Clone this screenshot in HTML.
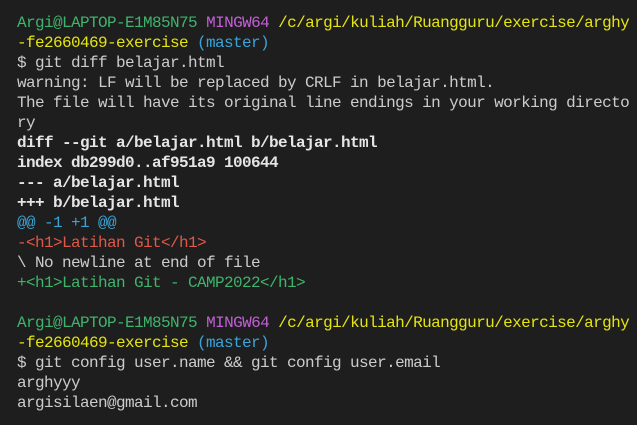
<!DOCTYPE html>
<html><head><style>
html,body{margin:0;padding:0;background:#1e1e1e;width:637px;height:425px;overflow:hidden}
pre{margin:0;padding:13px 0 0 17px;font-family:"Liberation Mono",monospace;font-size:16px;letter-spacing:-0.6px;line-height:20px;color:#cccccc;white-space:pre}
.g{color:#3fb46c}.m{color:#c35fd6}.y{color:#e5e510}.c{color:#3aa4d8}.r{color:#e0584a}.b{font-weight:bold;color:#e5e5e5}
</style></head><body><pre><span class="g">Argi@LAPTOP-E1M85N75</span> <span class="m">MINGW64</span> <span class="y">/c/argi/kuliah/Ruangguru/exercise/arghy</span>
<span class="y">-fe2660469-exercise</span> <span class="c">(master)</span>
$ git diff belajar.html
warning: LF will be replaced by CRLF in belajar.html.
The file will have its original line endings in your working directo
ry
<span class="b">diff --git a/belajar.html b/belajar.html</span>
<span class="b">index db299d0..af951a9 100644</span>
<span class="b">--- a/belajar.html</span>
<span class="b">+++ b/belajar.html</span>
<span class="c">@@ -1 +1 @@</span>
<span class="r">-&lt;h1&gt;Latihan Git&lt;/h1&gt;</span>
\ No newline at end of file
<span class="g">+&lt;h1&gt;Latihan Git - CAMP2022&lt;/h1&gt;</span>

<span class="g">Argi@LAPTOP-E1M85N75</span> <span class="m">MINGW64</span> <span class="y">/c/argi/kuliah/Ruangguru/exercise/arghy</span>
<span class="y">-fe2660469-exercise</span> <span class="c">(master)</span>
$ git config user.name &amp;&amp; git config user.email
arghyyy
argisilaen@gmail.com
</pre></body></html>
